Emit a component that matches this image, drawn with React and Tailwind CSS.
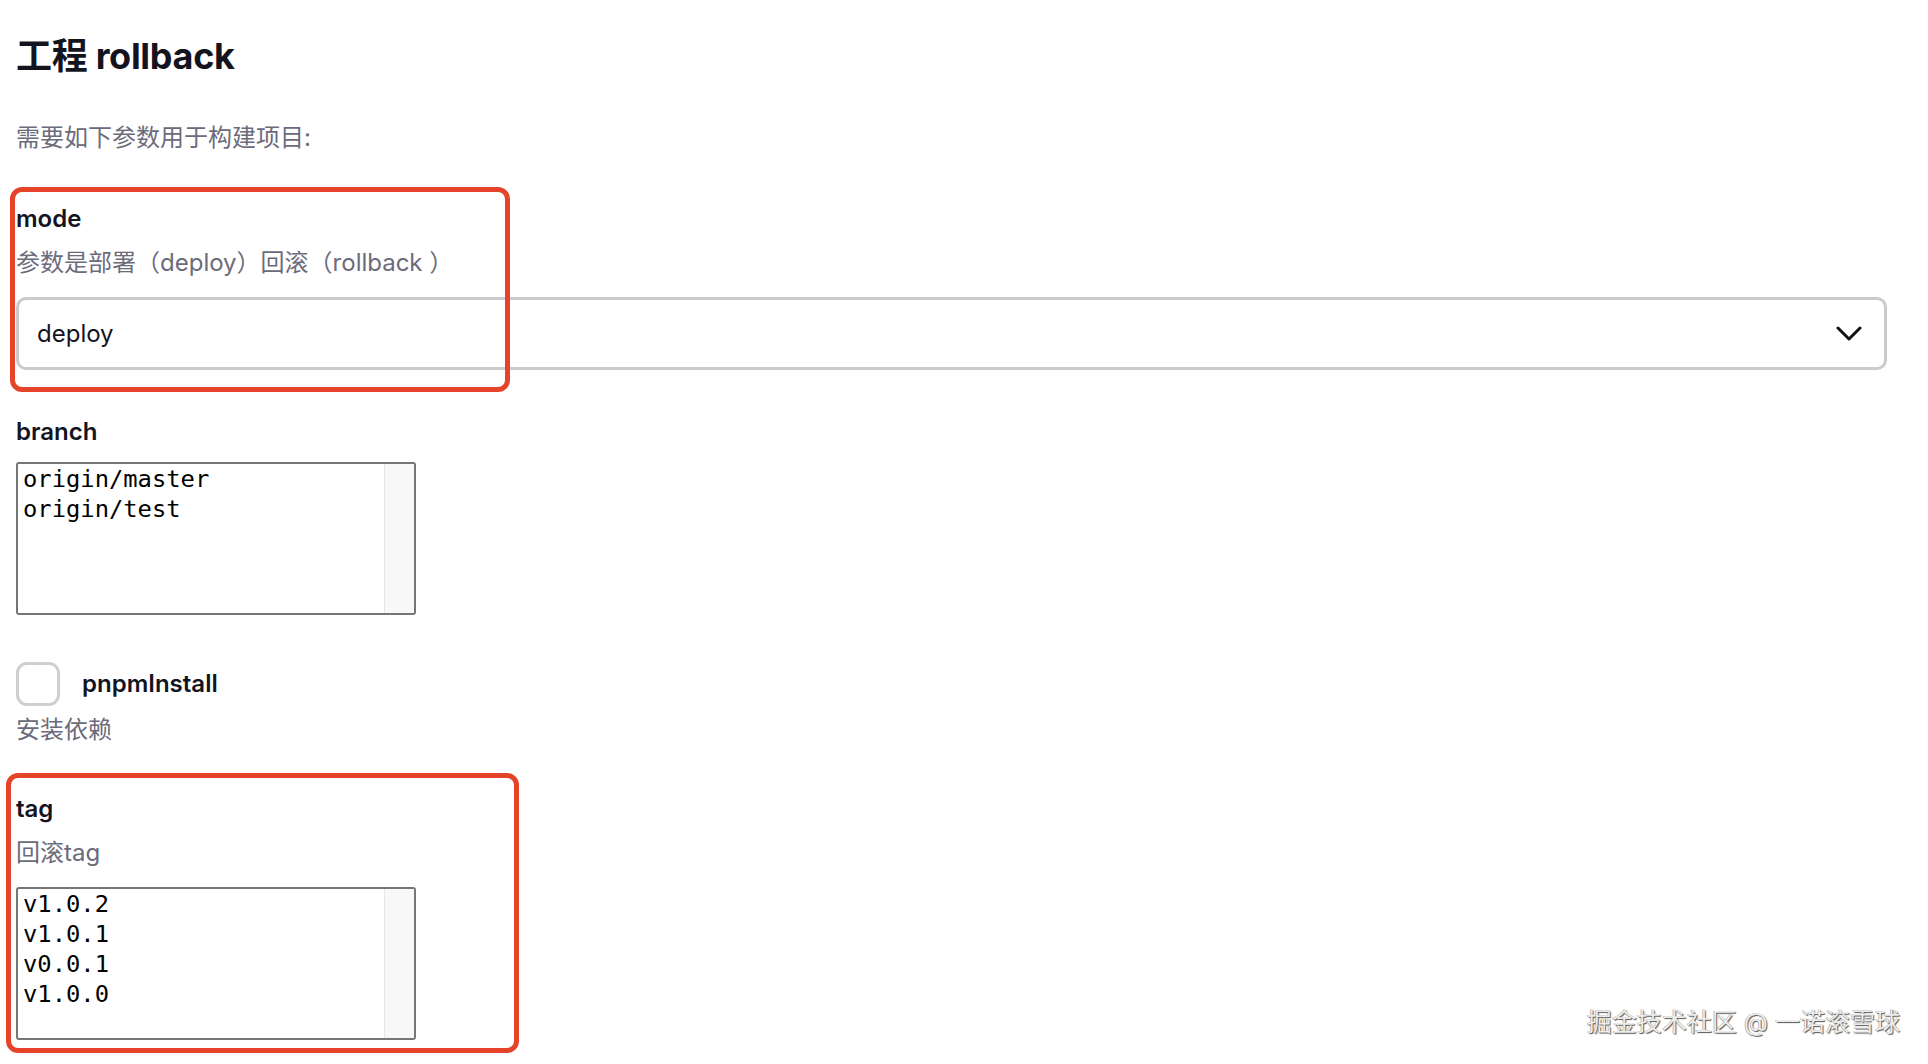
import React from "react";

function Listbox({ items }) {
  return (
    <div className="flex h-[153px] w-[400px] overflow-hidden rounded-[3px] border-2 border-[#767676] bg-white">
      <div className="flex-1 pl-[5px] font-['DejaVu_Sans_Mono',monospace] text-[23.8px] leading-[30px] text-black">
        {items.map((t) => (
          <div key={t}>{t}</div>
        ))}
      </div>
      <div className="w-[30px] border-l border-[#e6e6e6] bg-[#f8f8f8]" />
    </div>
  );
}

export default function App() {
  return (
    <div className="relative min-h-[1064px] w-full bg-white font-['Inter','Noto_Sans_CJK_SC',sans-serif] text-[#14141f]">
      <div className="pl-4 pr-[41px] pt-[35px]">
        <h1 className="text-[36px] font-bold leading-[42px] tracking-[-0.3px]">工程 rollback</h1>
        <p className="mt-[46px] text-[24px] leading-[30px] text-[#6b6b7b]">需要如下参数用于构建项目:</p>

        {/* mode */}
        <div className="relative mt-[51px]">
          <div className="text-[24px] font-semibold leading-[30px]">mode</div>
          <div className="mt-[14px] text-[24px] leading-[30px] text-[#6b6b7b]">参数是部署（deploy）回滚（rollback ）</div>
          <div className="mt-[19px] flex h-[73px] items-center justify-between rounded-[10px] border-[3px] border-[#c9cbce] pl-[18px] pr-[22px]">
            <span className="text-[24px] leading-[30px]">deploy</span>
            <svg width="26" height="16" viewBox="0 0 26 16" fill="none">
              <polyline points="2,2 13,13 24,2" stroke="#111" strokeWidth="3" strokeLinecap="round" strokeLinejoin="round" />
            </svg>
          </div>
          <div className="pointer-events-none absolute left-[-6px] top-[-17px] h-[205px] w-[500px] rounded-[12px] border-[5px] border-[#e6432b]" />
        </div>

        {/* branch */}
        <div className="mt-[47px]">
          <div className="text-[24px] font-semibold leading-[30px]">branch</div>
          <div className="mt-[15px]">
            <Listbox items={["origin/master", "origin/test"]} />
          </div>
        </div>

        {/* pnpmInstall */}
        <div className="mt-[47px]">
          <div className="flex items-center gap-[22px]">
            <div className="h-[44px] w-[44px] rounded-[11px] border-[3px] border-[#cfcfcf] bg-white" />
            <span className="text-[24px] font-semibold leading-[30px]">pnpmInstall</span>
          </div>
          <div className="mt-[9px] text-[24px] leading-[30px] text-[#6b6b7b]">安装依赖</div>
        </div>

        {/* tag */}
        <div className="relative mt-[49px]">
          <div className="text-[24px] font-semibold leading-[30px]">tag</div>
          <div className="mt-[14px] text-[24px] leading-[30px] text-[#6b6b7b]">回滚tag</div>
          <div className="mt-[19px]">
            <Listbox items={["v1.0.2", "v1.0.1", "v0.0.1", "v1.0.0"]} />
          </div>
          <div className="pointer-events-none absolute left-[-10px] top-[-21px] h-[280px] w-[513px] rounded-[12px] border-[5px] border-[#e6432b]" />
        </div>
      </div>

      <div className="absolute right-[28px] top-[1006px] text-[25px] leading-[32px] text-[#ececec] [text-shadow:1px_1px_1px_#555,-0.5px_-0.5px_0_#999]">
        掘金技术社区 @ 一诺滚雪球
      </div>
    </div>
  );
}
